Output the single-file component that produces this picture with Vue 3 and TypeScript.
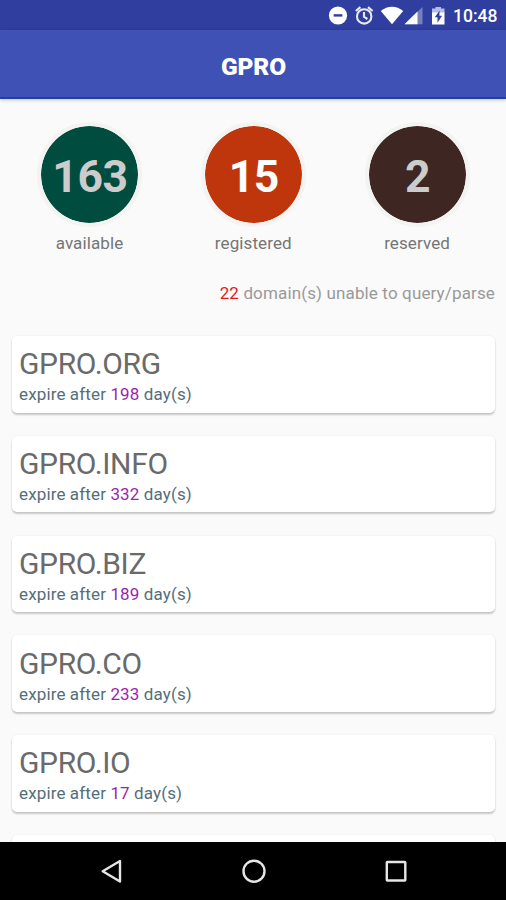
<script setup lang="ts">
interface Stat {
  value: number
  label: string
  tone: string
}

interface Domain {
  name: string
  days: number
}

const stats: Stat[] = [
  { value: 163, label: 'available', tone: 'green' },
  { value: 15, label: 'registered', tone: 'orange' },
  { value: 2, label: 'reserved', tone: 'brown' },
]

const domains: Domain[] = [
  { name: 'GPRO.ORG', days: 198 },
  { name: 'GPRO.INFO', days: 332 },
  { name: 'GPRO.BIZ', days: 189 },
  { name: 'GPRO.CO', days: 233 },
  { name: 'GPRO.IO', days: 17 },
]
</script>

<template>
  <div class="screen">
    <div class="status">
      <svg class="status-icons" width="120" height="30" viewBox="0 0 120 30">
        <circle cx="12" cy="15.5" r="9.1" fill="#fff" />
        <rect x="7.600" y="14.200" width="8.800" height="2.400" fill="#303f9f" />
        <g fill="none" stroke="#e8eaf8" stroke-width="2.100">
          <circle cx="38.200" cy="16.400" r="7.200" />
          <path d="M29.800 11l4.600-3.900M46.600 11l-4.600-3.900M38 12v4.800l3.400 2.200" />
        </g>
        <path d="M54.800 11C61.500 5.200 70.500 5.200 77.200 11L66 24.300z" fill="#fff" />
        <path d="M96.500 7v17.200H78.500z" fill="#7580c0" />
        <path d="M91.500 11.400v12.800h-13z" fill="#fff" />
        <path d="M106 8.600h3.500V7h5.500v1.600h3.500v4.400h-12.500z" fill="#b6bcdf" />
        <path d="M106 12.500h12.500v12h-12.500z" fill="#fff" />
        <path d="M113.600 10.400l-4.800 6.800h2.700v5.600l4.600-7h-2.700z" fill="#303f9f" />
      </svg>
      <span class="clock">10:48</span>
    </div>

    <header class="bar"><h1>GPRO</h1></header>

    <main class="content">
      <section class="stats">
        <div v-for="s in stats" :key="s.label" class="stat">
          <div class="disc" :class="s.tone">{{ s.value }}</div>
          <div class="label">{{ s.label }}</div>
        </div>
      </section>

      <p class="note"><span class="count">22</span> domain(s) unable to query/parse</p>

      <section class="cards">
        <article v-for="d in domains" :key="d.name" class="card">
          <h2>{{ d.name }}</h2>
          <p>expire after <span class="days">{{ d.days }}</span> day(s)</p>
        </article>
        <article class="card"></article>
      </section>
    </main>

    <nav class="nav">
      <svg width="26" height="26" viewBox="0 0 26 26"><path d="M21 3v20.500L3.700 13.200z" /></svg>
      <svg width="26" height="26" viewBox="0 0 26 26"><circle cx="13" cy="13.200" r="10.500" /></svg>
      <svg width="26" height="26" viewBox="0 0 26 26"><rect x="3.800" y="4" width="18.500" height="18.500" rx="0.500" /></svg>
    </nav>
  </div>
</template>

<style>
body {
  margin: 0;
  background: #fafafa;
}
</style>

<style scoped>
.screen {
  width: 506px;
  height: 900px;
  display: flex;
  flex-direction: column;
  overflow: hidden;
  background: #fafafa;
  font-family: Roboto, "Liberation Sans", sans-serif;
}
.status {
  flex: none;
  height: 30px;
  display: flex;
  align-items: center;
  justify-content: flex-end;
  gap: 7px;
  padding-right: 9px;
  background: #303f9f;
}
.clock {
  width: 44px;
  color: #fff;
  font-size: 17.500px;
  font-weight: 500;
  line-height: 32px;
  padding-top: 2px;
  white-space: nowrap;
}
.bar {
  flex: none;
  height: 69px;
  display: flex;
  align-items: center;
  justify-content: center;
  background: #3f51b5;
  border-bottom: 2px solid #2040a8;
  box-sizing: border-box;
  box-shadow: 0 1px 4px rgba(0, 0, 0, 0.22);
  position: relative;
}
h1 {
  margin: 6px 0 0 1px;
  color: #fff;
  font-size: 24.500px;
  font-weight: 900;
  letter-spacing: -0.200px;
  line-height: 30px;
}
.content {
  flex: 1;
  min-height: 0;
  overflow: hidden;
}
.stats {
  display: grid;
  grid-template-columns: repeat(3, 163.800px);
  justify-content: center;
  padding: 23px 0 0 0.600px;
}
.stat {
  display: flex;
  flex-direction: column;
  align-items: center;
}
.disc {
  box-sizing: border-box;
  width: 105px;
  height: 105px;
  padding: 6px 0 0 1px;
  border: 4px solid #f3f3f1;
  border-radius: 50%;
  background-clip: padding-box;
  display: flex;
  align-items: center;
  justify-content: center;
  font-size: 44.500px;
  font-weight: 700;
  letter-spacing: -0.400px;
  line-height: 91px;
}
.green {
  background-color: #004d40;
  color: #ccc;
}
.orange {
  background-color: #bf360c;
  color: #fff;
}
.brown {
  background-color: #3e2723;
  color: #ccc;
}
.label {
  margin-top: 6px;
  color: #757575;
  font-size: 17px;
  letter-spacing: 0.100px;
  line-height: 20px;
}
.note {
  margin: 30px 11px 0 0;
  text-align: right;
  color: #999;
  font-size: 17px;
  letter-spacing: 0.140px;
  line-height: 20px;
}
.count {
  color: #e01b1b;
}
.cards {
  display: flex;
  flex-direction: column;
  gap: 23.300px;
  padding: 33px 11px 0 12px;
}
.card {
  flex: none;
  box-sizing: border-box;
  height: 76.500px;
  padding: 10.200px 8px 0 7px;
  border-radius: 5px;
  background: #fff;
  box-shadow: 0 2px 2px rgba(0, 0, 0, 0.2), 0 0 2px rgba(0, 0, 0, 0.08);
}
h2 {
  margin: 0;
  color: #6a6a6a;
  font-size: 30px;
  font-weight: 400;
  letter-spacing: -0.330px;
  line-height: 36px;
}
.card p {
  margin: 2px 0 0;
  color: #546e7a;
  font-size: 17px;
  letter-spacing: 0.130px;
  line-height: 20px;
}
.card .days {
  color: #9c1fb0;
}
.nav {
  flex: none;
  height: 58px;
  display: grid;
  grid-template-columns: repeat(3, 142px);
  justify-content: center;
  justify-items: center;
  align-items: center;
  padding-left: 2px;
  background: #000;
}
.nav svg {
  fill: none;
  stroke: #e6e6e6;
  stroke-width: 2.400;
  stroke-linejoin: round;
}
</style>
